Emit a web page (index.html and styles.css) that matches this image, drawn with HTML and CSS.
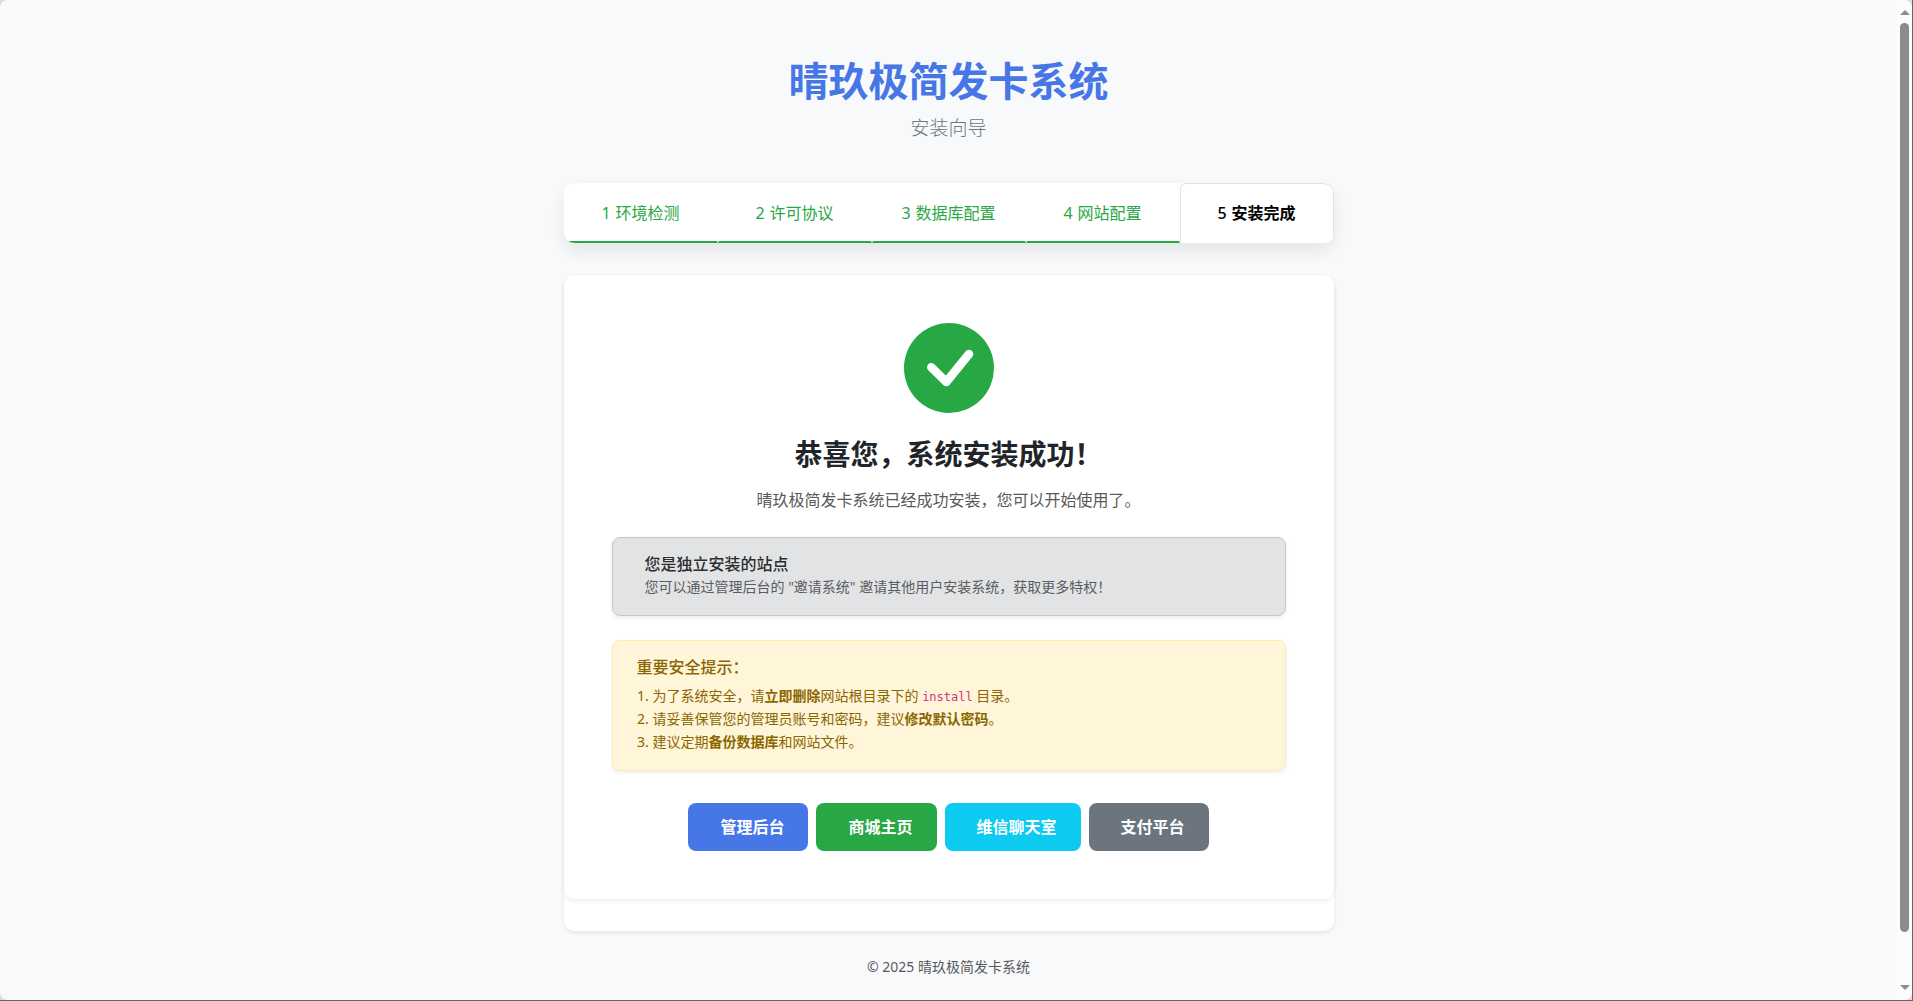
FILE: index.html
```
<!DOCTYPE html>
<html lang="zh-CN">
<head>
    <meta charset="UTF-8">
    <meta name="viewport" content="width=device-width, initial-scale=1.0">
    <title>晴玖极简发卡系统 - 安装向导</title>
    <link rel="stylesheet" href="styles.css">
</head>
<body>
    <div class="window">
        <div class="page">
            <div class="container">
                <header class="header">
                    <h1>晴玖极简发卡系统</h1>
                    <p>安装向导</p>
                </header>

                <nav class="steps">
                    <a class="step done" href="#step1"><span>1</span> 环境检测</a>
                    <a class="step done" href="#step2"><span>2</span> 许可协议</a>
                    <a class="step done" href="#step3"><span>3</span> 数据库配置</a>
                    <a class="step done" href="#step4"><span>4</span> 网站配置</a>
                    <a class="step active" href="#step5" aria-current="step"><span>5</span> 安装完成</a>
                </nav>

                <main class="content">
                    <section class="card">
                        <svg class="success-icon" viewBox="0 0 90 90" aria-hidden="true">
                            <circle cx="45" cy="45" r="45" fill="#28a745"/>
                            <path d="M27.3 44.2 L42.3 59 L65 31" fill="none" stroke="#fff" stroke-width="8.6" stroke-linecap="round" stroke-linejoin="round"/>
                        </svg>
                        <h2>恭喜您，系统安装成功！</h2>
                        <p class="lead">晴玖极简发卡系统已经成功安装，您可以开始使用了。</p>

                        <div class="alert alert-secondary">
                            <h3>您是独立安装的站点</h3>
                            <p>您可以通过管理后台的 "邀请系统" 邀请其他用户安装系统，获取更多特权！</p>
                        </div>

                        <div class="alert alert-warning">
                            <h3>重要安全提示：</h3>
                            <ol>
                                <li>为了系统安全，请<strong>立即删除</strong>网站根目录下的 <code>install</code> 目录。</li>
                                <li>请妥善保管您的管理员账号和密码，建议<strong>修改默认密码</strong>。</li>
                                <li>建议定期<strong>备份数据库</strong>和网站文件。</li>
                            </ol>
                        </div>

                        <div class="actions">
                            <a class="btn btn-primary" href="#admin">管理后台</a>
                            <a class="btn btn-success" href="#home">商城主页</a>
                            <a class="btn btn-info" href="#chat">维信聊天室</a>
                            <a class="btn btn-secondary" href="#pay">支付平台</a>
                        </div>
                    </section>
                </main>

                <footer class="footer">© 2025 晴玖极简发卡系统</footer>
            </div>
        </div>
        <div class="scrollbar" aria-hidden="true">
            <div class="arrow up"></div>
            <div class="track"><div class="thumb"></div></div>
            <div class="arrow down"></div>
        </div>
    </div>
</body>
</html>
```
FILE: styles.css
```
* {
    box-sizing: border-box;
}
body {
    margin: 0;
    min-height: 100vh;
    display: flex;
    background-color: #dedede;
    border-right: 1px solid #666;
    border-bottom: 1px solid #666;
    font-family: "Noto Sans", "Noto Sans CJK SC", sans-serif;
    font-size: 16px;
    line-height: 24px;
    color: #212529;
}
h1, h2, h3, p, ol {
    margin: 0;
}
a {
    text-decoration: none;
}
.window {
    flex: 1;
    display: flex;
    border-radius: 8px;
    overflow: hidden;
    background-color: #f8f9fb;
}
.page {
    flex: 1;
    padding: 57px 16px 20px;
}
.container {
    max-width: 770px;
    margin: 0 auto;
}

/* header */
.header {
    text-align: center;
    margin-bottom: 39px;
}
.header h1 {
    font-size: 40px;
    line-height: 48px;
    font-weight: 700;
    color: #4776e6;
    margin-bottom: 8px;
}
.header p {
    font-size: 19px;
    line-height: 31px;
    font-weight: 300;
    color: #6c757d;
}

/* steps */
.steps {
    display: flex;
    height: 60px;
    margin-bottom: 32px;
    background-color: #fff;
    border-radius: 10px;
    overflow: hidden;
    box-shadow: 0 8px 16px rgba(0, 0, 0, 0.08);
}
.step {
    flex: 1;
    display: flex;
    align-items: center;
    justify-content: center;
    gap: 5px;
    border: 1px solid transparent;
    border-bottom: 2px solid transparent;
    border-radius: 8px 8px 0 0;
}
.step.done {
    color: #28a745;
    border-bottom-color: #28a745;
}
.step.active {
    color: #000;
    font-weight: 700;
    border-color: #dee2e6 #dee2e6 #fff;
    border-radius: 6px 10px 0 0;
}
.step.active span {
    font-weight: 500;
}

/* content */
.content {
    padding-bottom: 32px;
    margin-bottom: 24px;
    background-color: #fff;
    border-radius: 10px;
    box-shadow: 0 2px 4px rgba(0, 0, 0, 0.07);
}
.card {
    padding: 48px;
    text-align: center;
    border-radius: 10px;
    box-shadow: 0 2px 4px rgba(0, 0, 0, 0.07);
}
.success-icon {
    display: block;
    width: 90px;
    height: 90px;
    margin: 0 auto 24px;
}
.card h2 {
    font-size: 28px;
    line-height: 34px;
    font-weight: 700;
    margin-bottom: 16px;
}
.lead {
    line-height: 26px;
    margin-bottom: 24px;
    color: #58595b;
}

/* alerts */
.alert {
    border: 1px solid;
    border-radius: 8px;
    text-align: left;
    box-shadow: 0 2px 4px rgba(0, 0, 0, 0.07);
}
.alert h3 {
    font-size: 16px;
    font-weight: 500;
}
.alert-secondary {
    padding: 14px 32px 17px;
    margin-bottom: 24px;
    background-color: #e2e3e5;
    border-color: #c4c8cb;
    color: #5a5c5f;
}
.alert-secondary h3 {
    color: #2b2d2f;
}
.alert-secondary p {
    font-size: 14px;
    line-height: 22px;
}
.alert-warning {
    padding: 14px 24px 17px;
    margin-bottom: 32px;
    background-color: #fff5d9;
    border-color: #ffebac;
    color: #8a6700;
}
.alert-warning h3 {
    margin-bottom: 5px;
}
.alert-warning ol {
    padding-left: 16px;
    font-size: 14px;
    line-height: 23px;
}
.alert-warning code {
    font-family: "DejaVu Sans Mono", monospace;
    font-size: 12px;
    line-height: 1;
    color: #d63384;
}

/* buttons */
.actions {
    display: flex;
    flex-wrap: wrap;
    justify-content: center;
    gap: 8px;
}
.btn {
    padding: 12px 24px 12px 32px;
    border-radius: 8px;
    font-weight: 700;
    color: #fff;
}
.btn-primary {
    background-color: #4776e6;
}
.btn-success {
    background-color: #28a745;
}
.btn-info {
    background-color: #0dcaf0;
}
.btn-secondary {
    background-color: #6c757d;
}

.footer {
    text-align: center;
    font-size: 14px;
    color: #58595b;
}

/* scrollbar */
.scrollbar {
    width: 15px;
    padding: 10px 0;
    display: flex;
    flex-direction: column;
    align-items: center;
    gap: 8px;
    background-color: #fcfcfc;
}
.track {
    flex: 1;
    width: 9px;
}
.thumb {
    height: calc(100% - 45px);
    border-radius: 5px;
    background-color: #8b8b8b;
}
.arrow {
    border-left: 5px solid transparent;
    border-right: 5px solid transparent;
}
.arrow.up {
    border-bottom: 5px solid #8b8b8b;
}
.arrow.down {
    border-top: 5px solid #8b8b8b;
}
```
